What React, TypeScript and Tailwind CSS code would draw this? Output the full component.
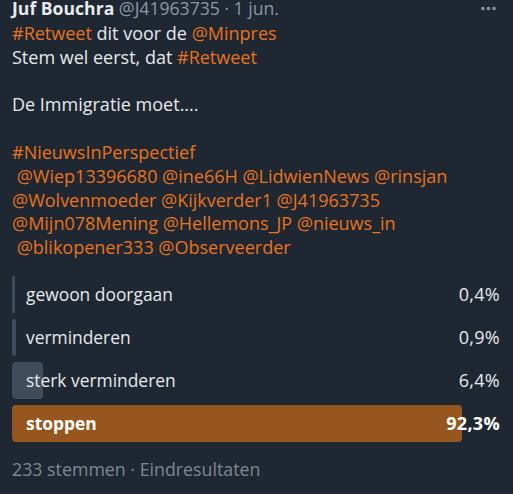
import { MoreHorizontal } from "lucide-react";

type Option = { label: string; pct: number };

const options: Option[] = [
  { label: "gewoon doorgaan", pct: 0.4 },
  { label: "verminderen", pct: 0.9 },
  { label: "sterk verminderen", pct: 6.4 },
  { label: "stoppen", pct: 92.3 },
];

const Tag = ({ children }: { children: React.ReactNode }) => (
  <span className="text-[#e8731b]">{children}</span>
);

const PollRow = ({ option, winner }: { option: Option; winner: boolean }) => (
  <div className="relative flex h-[37px] items-center justify-between">
    <div
      className={`absolute left-0 top-0 h-full rounded-[4px] ${
        winner ? "bg-[#98561f]" : "bg-[#3e4c5b]"
      }`}
      style={{ width: `max(3px, ${option.pct}%)` }}
    />
    <span
      className={`relative pl-[14px] text-[17.4px] ${
        winner ? "font-bold text-white" : "text-[#e7e9ea]"
      }`}
    >
      {option.label}
    </span>
    <span
      className={`relative text-[18px] tracking-[0.3px] ${
        winner ? "font-bold text-white" : "text-[#e7e9ea]"
      }`}
    >
      {option.pct.toFixed(1).replace(".", ",")}%
    </span>
  </div>
);

export default function App() {
  return (
    <div
      className="h-[494px] w-[513px] overflow-hidden bg-[#1e2732] pl-3 pr-[13px] text-[18px] text-[#e7e9ea]"
      style={{ fontFamily: '"Segoe UI", "Open Sans", sans-serif' }}
    >
      <div className="-mt-[3px] flex h-[22px] items-center justify-between text-[17.6px] leading-[22px]">
        <div className="whitespace-nowrap">
          <span className="font-bold">Juf Bouchra</span>{" "}
          <span className="text-[#8b98a5]">@J41963735 · 1 jun.</span>
        </div>
        <MoreHorizontal className="mr-[2px] h-[19px] w-[19px] text-[#8b98a5]" strokeWidth={2.6} />
      </div>

      <div className="mt-[3px] whitespace-pre leading-[23.8px]">
        <div>
          <Tag>#Retweet</Tag> dit voor de <Tag>@Minpres</Tag>
        </div>
        <div>
          Stem wel eerst, dat <Tag>#Retweet</Tag>
        </div>
        <div className="h-[23.8px]" />
        <div>De Immigratie moet....</div>
        <div className="h-[23.8px]" />
        <div>
          <Tag>#NieuwsInPerspectief</Tag>
        </div>
        <div>
          <Tag>{" @Wiep13396680 @ine66H @LidwienNews @rinsjan"}</Tag>
        </div>
        <div>
          <Tag>@Wolvenmoeder @Kijkverder1 @J41963735</Tag>
        </div>
        <div>
          <Tag>@Mijn078Mening @Hellemons_JP @nieuws_in</Tag>
        </div>
        <div>
          <Tag>{" @blikopener333 @Observeerder"}</Tag>
        </div>
      </div>

      <div className="mt-[16px] flex flex-col gap-[6px]">
        {options.map((o, i) => (
          <PollRow key={o.label} option={o} winner={i === options.length - 1} />
        ))}
      </div>

      <div className="mt-[14px] text-[17.8px] text-[#7d8894]">233 stemmen · Eindresultaten</div>
    </div>
  );
}
